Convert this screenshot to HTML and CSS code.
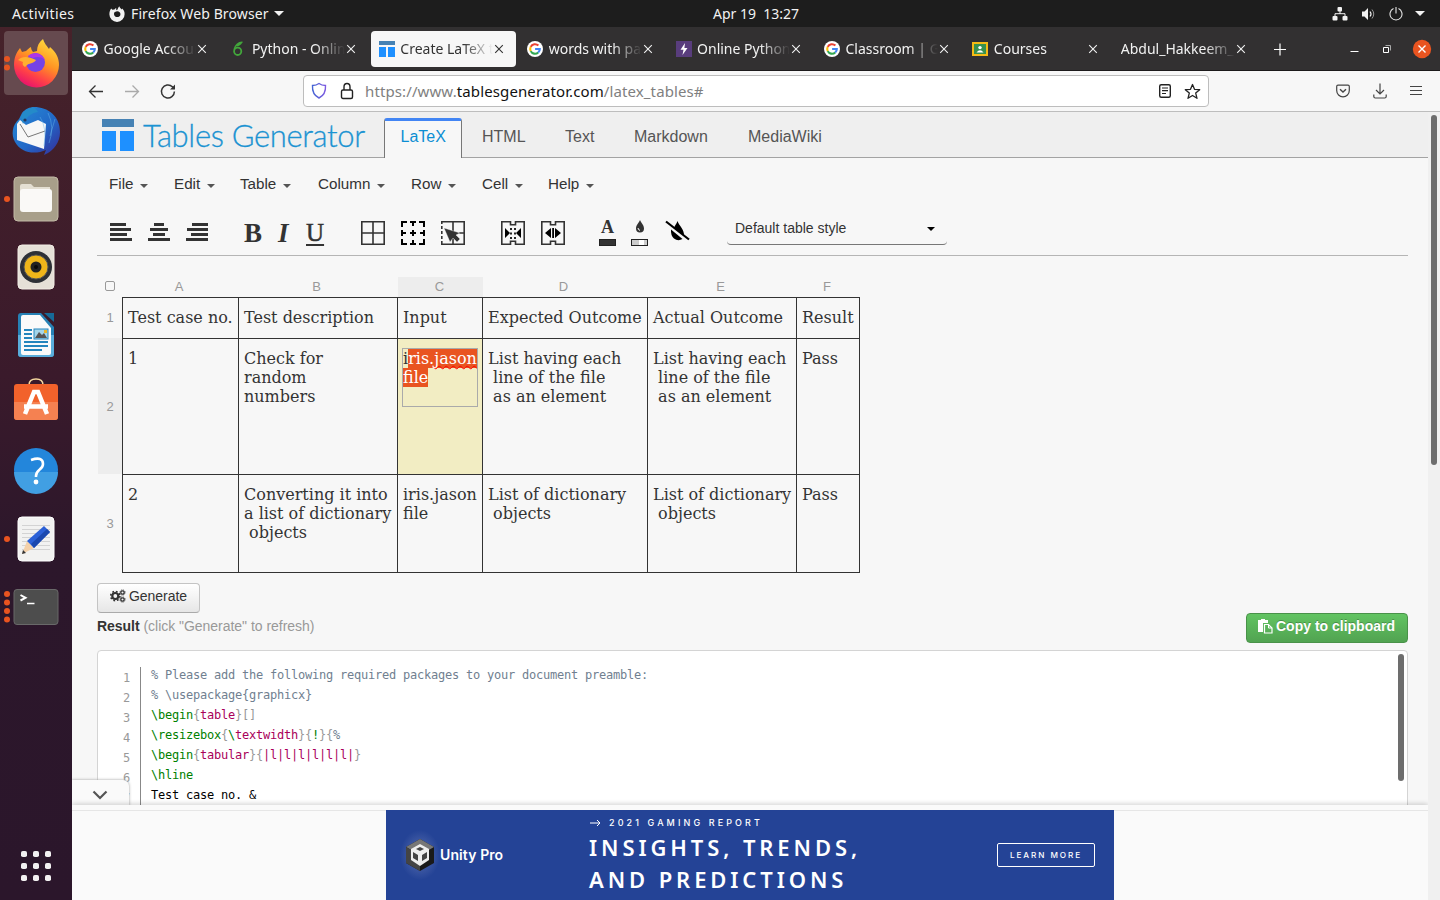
FILE: index.html
```html
<!DOCTYPE html>
<html lang="en">
<head>
<meta charset="utf-8">
<title>Create LaTeX tables online</title>
<link rel="stylesheet" href="styles.css">
</head>
<body>
<svg width="0" height="0" class="defs">
  <defs>
    <symbol id="google" viewBox="0 0 16 16"><circle cx="8" cy="8" r="8" fill="#fff"/><g fill="none" stroke-width="2.1"><path d="M11.4 4.6A4.8 4.8 0 0 0 3.7 5.9" stroke="#ea4335"/><path d="M3.7 5.9a4.8 4.8 0 0 0 0 4.2" stroke="#fbbc05"/><path d="M3.7 10.1a4.8 4.8 0 0 0 7.5 1.4" stroke="#34a853"/><path d="M11.2 11.5A4.6 4.6 0 0 0 12.8 8H8.1" stroke="#4285f4"/></g></symbol>
    <symbol id="x" viewBox="0 0 10 10"><path d="M1.2 1.2l7.6 7.6M8.8 1.2L1.2 8.8" stroke="currentColor" stroke-width="1.1" fill="none"/></symbol>
    <symbol id="tg" viewBox="0 0 32 32"><path fill="#4682b4" d="M0 0h32v8H0z"/><path fill="#1e90ff" d="M0 12h14v20H0zM18 12h14v20H18z"/></symbol>
    <symbol id="caret" viewBox="0 0 8 4"><path d="M0 0h8L4 4z" fill="currentColor"/></symbol>
  </defs>
</svg>
<header class="topbar">
  <span class="activities">Activities</span>
  <svg class="ffmono" width="16" height="16" viewBox="0 0 16 16"><path fill="#f2f2f2" fill-rule="evenodd" d="M2.2 2.4l1.2 1.4 2-.3C6 2.4 7 1.900 7.300 1.900c-.5 1 0 1.900.7 2.400C9 3 9 1.500 10.300.2c.3 1.600 1.500 2.200 2.500 3.200l.4-.9C14.800 4 15.700 6 15.600 8.200A7.600 7.600 0 0 1 .4 8.400C.3 6 1 4 2.200 2.400zM8 5.300c-1 .1-2 .5-2.800 1.400-.7 2.100.6 4.400 3 4.400 2.600 0 4.100-2.500 2.700-4.700C10 5.800 9 5.200 8 5.300z"/></svg>
  <span class="appname">Firefox Web Browser</span>
  <svg class="topcaret" width="10" height="5"><use href="#caret"/></svg>
  <span class="clock">Apr 19&nbsp; 13:27</span>
  <div class="tray">
    <svg width="16" height="14" viewBox="0 0 16 14"><g fill="#f2f2f2"><rect x="5.500" y="0" width="4.500" height="4.500" rx="1"/><rect x="0.500" y="9" width="5" height="4.500" rx="1"/><rect x="10.500" y="9" width="5" height="4.500" rx="1"/></g><path d="M8 4v3M3 9.500V6.700h10v2.800" stroke="#f2f2f2" fill="none"/></svg>
    <svg width="16" height="14" viewBox="0 0 16 14"><path d="M1 4.500h2.500L7 1v12L3.500 9.500H1z" fill="#f2f2f2"/><path d="M9 4.500q2 2.500 0 5" stroke="#f2f2f2" stroke-width="1.200" fill="none"/><path d="M11 2.500q3.500 4.500 0 9" stroke="#999" fill="none"/></svg>
    <svg width="14" height="14" viewBox="0 0 14 14"><path d="M4.500 1.600a6 6 0 1 0 5 0M7 0v6.500" stroke="#e6e6e6" stroke-width="1.100" fill="none"/></svg>
    <svg width="10" height="5"><use href="#caret"/></svg>
  </div>
</header>
<div class="desktop">
  <nav class="dock">
    <svg width="72" height="68" viewBox="0 0 72 68"><defs><linearGradient id="fx" x1=".8" y1="0" x2=".3" y2="1"><stop offset="0" stop-color="#ffe13f"/><stop offset=".45" stop-color="#ff9423"/><stop offset=".75" stop-color="#ff4048"/><stop offset="1" stop-color="#e5106f"/></linearGradient></defs><rect x="4" y="2" width="64" height="64" rx="4" fill="#664a4f"/><path fill="url(#fx)" d="M20 19l2 4 4-1c2-2 3-3 5-4 0 2 1 4 2 5l4-1c0-5 2-9 6-12 1 4 4 7 6 10l1-2c6 5 9 11 9 18A22.500 22.500 0 0 1 14 36c0-7 2-12 6-17z"/><circle cx="35.500" cy="33.500" r="9.500" fill="#7542e5"/><path d="M28 27c6-5 14-3 17 4-5-4-9-3-12-2z" fill="#b035e8"/><path fill="#ffb02e" d="M18 31c4-4 10-4 18 0-2 4-7 2-11 7-2-1-3-3-2-5z"/><g fill="#e95420"><circle cx="7" cy="30" r="3"/><circle cx="7" cy="38.500" r="3"/></g></svg>
    <svg width="72" height="68" viewBox="0 0 72 68"><defs><linearGradient id="tb" x1="0" y1="0" x2="1" y2="1"><stop offset="0" stop-color="#268cd5"/><stop offset=".55" stop-color="#2269c8"/><stop offset="1" stop-color="#352b98"/></linearGradient></defs><path fill="url(#tb)" d="M22 16c3-4 8-6 12-6 14 0 26 9 26 25 0 11-7 18-12 21l-4 2 2-5c-11 5-25 3-31-8-4-7-3-17 4-23z"/><path d="M17 27l3-4 6 5 12-5 8 4-2 25-27-9z" fill="#f7f7f7"/><path d="M20 27l8 13 17-6" stroke="#777" fill="none"/><path d="M21 20c3-8 10-10 14-9l3 4c-7 1-12 5-15 12z" fill="#248bc9"/><circle cx="25" cy="23" r="1.600" fill="#233860"/><path d="M40 20q7 10 4 29M48 16q7 14 1 30M55 22l-5 17" stroke="#65b8ea" opacity=".45" fill="none"/></svg>
    <svg width="72" height="68" viewBox="0 0 72 68"><rect x="14" y="12" width="44" height="44" rx="4" fill="#a89f8a" stroke="#c2b9a6"/><path d="M20 32V21q0-2 2-2h9l3 3h16v14z" fill="#e4dfd2"/><rect x="20" y="24" width="32" height="23" rx="3" fill="#faf9f7"/><circle cx="7" cy="34" r="3" fill="#e95420"/></svg>
    <svg width="72" height="68" viewBox="0 0 72 68"><rect x="18" y="12" width="36" height="44" rx="4" fill="#e5e0d7" stroke="#f2ede5"/><circle cx="36" cy="34" r="16" fill="#2d3036"/><circle cx="36" cy="34" r="12" fill="#efb51a" stroke="#555"/><circle cx="36" cy="34" r="5.500" fill="#222"/><circle cx="36" cy="34" r="2" fill="#090909"/></svg>
    <svg width="72" height="68" viewBox="0 0 72 68"><path d="M18 15q0-3 3-3h20l13 14v27q0 3-3 3H21q-3 0-3-3z" fill="#2681b5"/><path d="M18 34h36v19q0 3-3 3H21q-3 0-3-3z" fill="#59addb"/><path d="M21 16q0-2 2-2h17l11 13v25q0 2-2 2H23q-2 0-2-2z" fill="#fafafa"/><path d="M44 12h10v9z" fill="#176a98"/><g stroke="#2485bd" stroke-width="2"><path d="M24 29h8M24 33h8M24 37h8M24 41h24M24 45h24M24 49h18"/></g><rect x="34" y="28" width="14" height="10" fill="#a4d5e9" stroke="#2485bd"/><path d="M35 37l4-6 3 3 2-2 3 5z" fill="#555"/><rect x="44" y="29" width="3" height="3" fill="#e9b62b"/></svg>
    <svg width="72" height="68" viewBox="0 0 72 68"><path d="M29 18v-2q0-6 7-6t7 6v2" fill="none" stroke="#f6d9a0" stroke-width="1.500"/><rect x="14" y="15" width="44" height="36" rx="3" fill="#f2622b"/><path d="M14 33h44v15q0 3-3 3H17q-3 0-3-3z" fill="#f58151"/><path d="M25 45l9-22h4l9 22M24 37.500h24" stroke="#fff" stroke-width="4.500" fill="none"/></svg>
    <svg width="72" height="68" viewBox="0 0 72 68"><circle cx="36" cy="33" r="22" fill="#2386db"/><path d="M14 35a22 22 0 0 0 44 0z" fill="#419fe3"/><path d="M31 23q12-4 12 4c0 6-7 5-7 12v1" stroke="#fff" stroke-width="2.600" fill="none"/><circle cx="36" cy="45" r="2.400" fill="#fff"/></svg>
    <svg width="72" height="68" viewBox="0 0 72 68"><rect x="18" y="12" width="36" height="44" rx="4" fill="#f2f2f1" stroke="#fff"/><path d="M22 20.500h28M22 24.500h28M22 28.500h28M22 32.500h28M22 36.500h28M22 40.500h28M22 44.500h28" stroke="#d3d3d3"/><path d="M22 49l5-13 7 7z" fill="#f4d1aa"/><path d="M27 36l17-15 6 6-16 16z" fill="#2c61d7"/><path d="M31 39l16-15 3 3-16 16z" fill="#1b48ae"/><path d="M22 49l1-4 3 3z" fill="#333"/><circle cx="7" cy="34" r="3" fill="#e95420"/></svg>
    <svg width="72" height="68" viewBox="0 0 72 68"><rect x="14" y="16.500" width="44" height="35" rx="3" fill="#4d4d4d" stroke="#696969"/><path d="M20.500 22l5 2.800-5 2.700" stroke="#fff" stroke-width="2" fill="none"/><path d="M27 30.500h7.500" stroke="#fff" stroke-width="1.500"/><g fill="#e95420"><circle cx="7" cy="21" r="3"/><circle cx="7" cy="29.500" r="3"/><circle cx="7" cy="38" r="3"/><circle cx="7" cy="46.500" r="3"/></g></svg>
    <svg class="launcher" width="72" height="40" viewBox="0 0 72 40"><g fill="#f3f1f2"><rect x="21" y="5" width="6" height="6" rx="1.800"/><rect x="33" y="5" width="6" height="6" rx="1.800"/><rect x="45" y="5" width="6" height="6" rx="1.800"/><rect x="21" y="17" width="6" height="6" rx="1.800"/><rect x="33" y="17" width="6" height="6" rx="1.800"/><rect x="45" y="17" width="6" height="6" rx="1.800"/><rect x="21" y="29" width="6" height="6" rx="1.800"/><rect x="33" y="29" width="6" height="6" rx="1.800"/><rect x="45" y="29" width="6" height="6" rx="1.800"/></g></svg>
  </nav>
  <main class="window">
    <div class="tabs">
      <div class="tab"><svg class="fav"><use href="#google"/></svg><span class="title">Google Accounts</span><svg class="close"><use href="#x"/></svg></div>
      <div class="tab"><svg class="fav" viewBox="0 0 16 16"><path d="M12.500 1.300C8.500 1 5 4.500 4.200 8.500M5.500 4.500q3.500.5 6-3" stroke="#42a63b" stroke-width="1.500" fill="none"/><ellipse cx="7.700" cy="10.300" rx="3.600" ry="3.700" stroke="#42a63b" stroke-width="1.800" fill="none"/></svg><span class="title">Python - Online LaTeX</span><svg class="close"><use href="#x"/></svg></div>
      <div class="tab active"><svg class="fav"><use href="#tg"/></svg><span class="title">Create LaTeX tables</span><svg class="close"><use href="#x"/></svg></div>
      <div class="tab"><svg class="fav"><use href="#google"/></svg><span class="title">words with pa in them</span><svg class="close"><use href="#x"/></svg></div>
      <div class="tab"><svg class="fav" viewBox="0 0 16 16"><path d="M0 0h16v16H0z" fill="#593d7d"/><path d="M9 2L4.500 8.700h3L6.500 14 11.500 7H8.400z" fill="#fff"/></svg><span class="title">Online Python Compiler</span><svg class="close"><use href="#x"/></svg></div>
      <div class="tab"><svg class="fav"><use href="#google"/></svg><span class="title">Classroom | Google</span><svg class="close"><use href="#x"/></svg></div>
      <div class="tab"><svg class="fav" viewBox="0 0 16 16"><path d="M0 1h16v14H0z" fill="#f5ba15"/><path d="M2 3h12v10H2z" fill="#39904e"/><circle cx="8" cy="6.600" r="1.700" fill="#fff"/><path d="M4.500 11.500q3.500-4.500 7 0z" fill="#fff"/></svg><span class="title">Courses</span><svg class="close"><use href="#x"/></svg></div>
      <div class="tab"><span class="title">Abdul_Hakkeem_PA</span><svg class="close"><use href="#x"/></svg></div>
      <svg class="winctl" width="176" height="44" viewBox="0 0 176 44"><g stroke="#fff" fill="none"><path d="M18 22.500h12M24 16.500v12" stroke-width="1.200"/><path d="M94.500 24.500h8"/><path d="M127.500 20.500h5v5h-5z"/><path d="M129.500 18.500h5v5" stroke="#aaa"/></g><circle cx="166" cy="22" r="9.200" fill="#e95420"/><path d="M162.500 18.500l7 7M169.500 18.500l-7 7" stroke="#fff" stroke-width="1.400"/></svg>
    </div>
    <div class="navbar">
      <svg class="navicons" width="120" height="40" viewBox="0 0 120 40"><g fill="none" stroke-width="1.300"><path d="M31 20.500H17.500M23.500 14.500l-6 6 6 6" stroke="#333"/><path d="M53 20.500h13.500M60.500 14.500l6 6-6 6" stroke="#aaa"/><path d="M102.400 20.500a6.500 6.500 0 1 1-2-4.700l2 2" stroke="#333" stroke-width="1.500"/></g><path d="M103 13.500v5h-5z" fill="#333"/></svg>
      <div class="urlbar">
        <svg width="16" height="18" viewBox="0 0 16 18"><defs><linearGradient id="sh"><stop offset="0" stop-color="#4464d3"/><stop offset="1" stop-color="#7d5ae0"/></linearGradient></defs><path d="M8 1.500c2 1.500 4 2 6.500 2 .4 6-1.500 10-6.500 12.500C3 13.500 1.100 9.500 1.500 3.500 4 3.500 6 3 8 1.500z" fill="none" stroke="url(#sh)" stroke-width="1.400"/></svg>
        <svg class="lock" width="14" height="18" viewBox="0 0 14 18"><rect x="1.500" y="8" width="11" height="8.500" rx="1.500" fill="none" stroke="#222" stroke-width="1.400"/><path d="M4 8V5q0-3.500 3-3.500T10 5v3" fill="none" stroke="#222" stroke-width="1.400"/></svg>
        <span class="url">https://www.<b>tablesgenerator.com</b>/latex_tables#</span>
        <svg class="reader" width="14" height="16" viewBox="0 0 14 16"><rect x="1.700" y="1.700" width="10.600" height="12.600" rx="1.500" fill="none" stroke="#222" stroke-width="1.400"/><path d="M4 5h6M4 7.700h6M4 10.500h4" stroke="#222" stroke-width="1.200"/></svg>
        <svg width="17" height="17" viewBox="0 0 17 17"><path d="M8.500 1.500l2 4.800 5.200.4-4 3.400 1.300 5.200-4.500-2.800L4 15.300l1.300-5.200-4-3.400 5.200-.4z" fill="none" stroke="#222" stroke-width="1.300" stroke-linejoin="round"/></svg>
      </div>
      <div class="naveend">
        <svg width="14" height="14" viewBox="0 0 14 14"><path d="M2 1.200h10q1.300 0 1.300 1.300v4a6.300 6.300 0 0 1-12.600 0v-4q0-1.300 1.300-1.300z" fill="none" stroke="#444" stroke-width="1.200"/><path d="M4 5.200L7 8l3-2.800" fill="none" stroke="#444" stroke-width="1.400"/></svg>
        <svg width="14" height="16" viewBox="0 0 14 16"><path d="M7 .5v10M3 7l4 4 4-4M.8 11.500v2q0 1.500 1.500 1.500h9.400q1.500 0 1.500-1.500v-2" fill="none" stroke="#444" stroke-width="1.200"/></svg>
        <svg width="12" height="12" viewBox="0 0 12 12"><path d="M0 1.500h12M0 5.500h12M0 9.500h12" stroke="#444" stroke-width="1.200"/></svg>
      </div>
    </div>
    <div class="viewport">
      <div class="page">
        <div class="sitehead">
          <svg width="32" height="32"><use href="#tg"/></svg>
          <span class="brand">Tables Generator</span>
          <div class="sitenav"><span class="on">LaTeX</span><span class="n2">HTML</span><span class="n3">Text</span><span class="n4">Markdown</span><span class="n5">MediaWiki</span></div>
        </div>
        <div class="menu">
          <span class="m1">File<svg><use href="#caret"/></svg></span><span class="m2">Edit<svg><use href="#caret"/></svg></span><span class="m3">Table<svg><use href="#caret"/></svg></span><span class="m4">Column<svg><use href="#caret"/></svg></span><span class="m5">Row<svg><use href="#caret"/></svg></span><span class="m6">Cell<svg><use href="#caret"/></svg></span><span class="m7">Help<svg><use href="#caret"/></svg></span>
        </div>
        <div class="tools">
          <svg width="98" height="20" viewBox="0 0 98 20"><g stroke="#333" stroke-width="3"><path d="M0 2.500h16M0 7.500h21M0 12.500h17M0 17.500h22M44 2.500h10M40 7.500h18M43 12.500h12M38 17.500h22M82 2.500h16M77 7.500h21M81 12.500h17M76 17.500h22"/></g></svg>
          <span class="tb">B</span><span class="ti">I</span><span class="tu">U</span>
          <svg class="grid1" width="104" height="24" viewBox="0 0 104 24"><g fill="none" stroke="#333" stroke-width="1.600"><path d="M.8.8h22.400v22.400H.8zM12 0v24M0 12h24"/><path d="M80 .8h23.200v22.400H80M92 0v24M98 12h6"/><path d="M80.800 0v24" stroke-dasharray="3 2"/></g><g fill="none" stroke="#000" stroke-width="2"><path d="M41 6V1h5M58 1h5v5M63 18v5h-5M46 23h-5v-5M49 1h6M49 23h6M41 9v6M63 9v6M52 1v4M52 9v6M52 19v4M41 12h4M49 12h6M59 12h4"/></g><path d="M83 7l16 5-4 2 4 4-3 3-4-4-3 4z" fill="#333" stroke="#f7f7f7" stroke-width=".4"/></svg>
          <svg class="grid2" width="64" height="24" viewBox="0 0 64 24"><path d="M9.500.8H.8v22.400h8.700v-3h5v3h8.700V.8h-8.700v3h-5zM49.500.8h-8.700v22.400h8.700v-3h5v3h8.700V.8h-8.700v3h-5z" fill="none" stroke="#333" stroke-width="1.600"/><path d="M4 7l5 5-5 5zM20 7l-5 5 5 5zM50 7l-6 5 6 5zM54 7l6 5-6 5zM51.200 7h1.800v10h-1.800z"/><path d="M10 7v11M14 7v11" stroke="#000" stroke-width="1.700" stroke-dasharray="2 2.500"/></svg>
          <span class="fg"><b>A</b><i></i></span>
          <span class="bgc"><svg width="10" height="13" viewBox="0 0 10 13"><path d="M5 0C6 3 9 5 9 8.500a4 4 0 0 1-8 0C1 5 4 3 5 0z" fill="#333"/><path d="M3 8q.2 2 2 2.400" stroke="#fff" fill="none"/></svg><i></i></span>
          <svg class="nodrop" width="25" height="22" viewBox="0 0 25 22"><path d="M12.500 1c1.500 5 7 8 6.500 15L9 8c1-3 2.500-4 3.500-7z"/><path d="M6 9.500L17.500 19Q13 21.500 9 18.500 5.500 15.500 6 9.500z"/><path d="M1 1.500l23 18" stroke="#000" stroke-width="2.200"/></svg>
          <span class="select">Default table style<svg><use href="#caret"/></svg></span>
        </div>
        <div class="sheet">
          <span class="corner"><i></i></span><span class="h">A</span><span class="h">B</span><span class="h sel">C</span><span class="h">D</span><span class="h">E</span><span class="h">F</span>
          <span class="r">1</span><div class="c">Test case no.</div><div class="c">Test description</div><div class="c">Input</div><div class="c">Expected Outcome</div><div class="c">Actual Outcome</div><div class="c last">Result</div>
          <span class="r sel">2</span><div class="c">1</div><div class="c">Check for
random
numbers</div><div class="c cur"><div class="edit">i<mark>ris.<u>jason</u></mark>
<mark>file</mark></div></div><div class="c">List having each
 line of the file
 as an element</div><div class="c">List having each
 line of the file
 as an element</div><div class="c last">Pass</div>
          <span class="r">3</span><div class="c bot">2</div><div class="c bot">Converting it into
a list of dictionary
 objects</div><div class="c bot">iris.jason
file</div><div class="c bot">List of dictionary
 objects</div><div class="c bot">List of dictionary
 objects</div><div class="c bot last">Pass</div>
        </div>
        <span class="btn"><svg width="16" height="14" viewBox="0 0 16 14"><g fill="none" stroke="#333"><circle cx="5.300" cy="7" r="3" stroke-width="2.200"/><circle cx="5.300" cy="7" r="4.600" stroke-width="1.600" stroke-dasharray="1.800 1.810"/><circle cx="12.500" cy="3.500" r="1.700" stroke-width="1.300"/><circle cx="12.500" cy="3.500" r="2.600" stroke-dasharray="1 1.040"/><circle cx="12.500" cy="10.500" r="1.700" stroke-width="1.300"/><circle cx="12.500" cy="10.500" r="2.600" stroke-dasharray="1 1.040"/></g></svg>Generate</span>
        <div class="resultrow"><span class="reslabel"><b>Result</b> (click "Generate" to refresh)</span><span class="copy"><svg width="15" height="15" viewBox="0 0 15 15"><path d="M0 1h3V0h4v1h3v3H5v9H0z" fill="#fff"/><path d="M6.500 5.500h4l3.500 3.500v5H6.500z" fill="none" stroke="#fff" stroke-width="1.200"/><path d="M10.500 5.500V9H14" stroke="#fff" fill="none"/></svg>Copy to clipboard</span></div>
        <div class="codebox">
          <div class="nums">1
2
3
4
5
6
7</div>
          <pre class="code"><s>% Please add the following required packages to your document preamble:</s>
<s>% \usepackage{graphicx}</s>
<em>\begin</em><q>{</q><b>table</b><q>}[]</q>
<em>\resizebox</em><q>{</q><em>\</em><b>textwidth</b><q>}{</q><em>!</em><q>}{</q><s>%</s>
<em>\begin</em><q>{</q><b>tabular</b><q>}{</q><b>|l|l|l|l|l|l|</b><q>}</q>
<em>\hline</em>
Test case no. &amp;</pre>
          <i class="codethumb"></i>
        </div>
        <div class="adwrap">
          <div class="adtab"><svg width="16" height="10" viewBox="0 0 16 10"><path d="M1.500 1.500L8 8l6.500-6.500" stroke="#555" stroke-width="2.200" fill="none"/></svg></div>
          <div class="adstrip"></div>
          <div class="adarea">
            <div class="ad">
              <svg class="unity" width="40" height="50" viewBox="0 0 40 50"><defs><radialGradient id="glow"><stop offset=".4" stop-color="#6d80ba" stop-opacity=".45"/><stop offset="1" stop-color="#6d80ba" stop-opacity="0"/></radialGradient></defs><ellipse cx="20" cy="25" rx="20" ry="25" fill="url(#glow)"/><path d="M20 9l14 8v16l-14 8-14-8V17z" fill="#1a1a1a"/><path d="M20 9l14 8-14 8-14-8z" fill="#777"/><path d="M6 17l14 8v16L6 33z" fill="#444"/><path d="M20 14l9 5v11l-9 6-9-6V19z" fill="#eee"/><path d="M20 17l4 2-4 2-4-2zM13 22l5 3v6l-5-3zM27 22l-5 3v6l5-3z" fill="#444"/></svg>
              <span class="uname">Unity Pro</span>
              <div class="adtext"><div class="rep"><svg width="13" height="8" viewBox="0 0 13 8"><path d="M1 4h10M8 1l3 3-3 3" stroke="#fff" fill="none"/></svg>2021 GAMING REPORT</div><div class="big">INSIGHTS, TRENDS,</div><div class="big big2">AND PREDICTIONS</div></div>
              <span class="learn">LEARN MORE</span>
            </div>
          </div>
        </div>
      </div>
      <div class="scroll"><i></i></div>
    </div>
  </main>
</div>
</body>
</html>
```
FILE: styles.css
```css
* { box-sizing: border-box; }
body { margin: 0; width: 1440px; height: 900px; overflow: hidden; font-family: "Liberation Sans", sans-serif; color: #333; }
svg { display: block; flex: none; }
.defs { position: absolute; }
.topbar { height: 27px; background: #1d1d1d; color: #f2f2f2; display: flex; align-items: center; font: 14px "Noto Sans", sans-serif; white-space: nowrap; }
.activities { width: 97px; padding-left: 12px; letter-spacing: .4px; }
.ffmono { margin-left: 12px; }
.appname { width: 143px; margin-left: 6px; letter-spacing: .12px; }
.clock { width: 90px; margin-left: 429px; letter-spacing: 0; }
.tray { margin-left: auto; padding-right: 15px; display: flex; align-items: center; gap: 12px; }
.tray svg:nth-child(2) { margin-left: 1px; }
.tray svg:first-child { margin-left: 0; }
.desktop { display: flex; height: 873px; }
.dock { width: 72px; background: linear-gradient(#46222a, #3a1a2b 40%, #2c172b 60%, #2b162b); padding-top: 2px; display: flex; flex-direction: column; }
.launcher { margin-top: auto; margin-bottom: 14px; }
.window { width: 1368px; display: flex; flex-direction: column; background: #f7f7f7; }
.tabs { height: 44px; background: #323031; border-bottom: 1px solid #1c1a1b; display: flex; padding-left: 2px; align-items: center; font: 14px "Noto Sans", sans-serif; color: #f2f2f2; }
.tab { width: 145.400px; margin-right: 3px; height: 36px; display: flex; align-items: center; padding-left: 8px; border-radius: 4px; flex: none; }
.tab.active { background: #f7f7f7; color: #333; }
.fav { width: 16px; height: 16px; margin-right: 5.500px; }
.title { flex: 1; min-width: 0; white-space: nowrap; overflow: hidden; line-height: 20px; padding-top: 1px; mask-image: linear-gradient(90deg, #000 calc(100% - 30px), transparent); }
.close { width: 10px; height: 10px; margin-right: 12px; margin-left: 1px; }
.winctl { margin-left: -5px; }
.navbar { height: 41px; border-bottom: 1px solid #bdbdbd; display: flex; align-items: center; }
.navicons { margin-right: 111px; }
.urlbar { width: 906px; height: 32px; border: 1px solid #bdbdbd; border-radius: 4px; background: #fff; display: flex; align-items: center; padding: 0 7px; }
.lock { margin-left: 13px; }
.url { margin-left: 11px; font: 15px "Noto Sans", sans-serif; letter-spacing: .11px; color: #808080; white-space: nowrap; }
.url b { font-weight: 400; color: #111; }
.reader { margin-left: auto; margin-right: 12px; }
.naveend { display: flex; align-items: center; margin-left: auto; gap: 23px; padding-right: 18px; }
.viewport { display: flex; flex: 1; min-height: 0; }
.scroll { width: 12px; background: #f0f0f0; padding: 3px; }
.scroll i { display: block; width: 6px; height: 350px; border-radius: 3px; background: #6d6d6d; }
.page { width: 1356px; height: 788px; position: relative; overflow: hidden; }
.sitehead { height: 46px; background: #efefef; border-bottom: 1px solid #a3a3a3; display: flex; align-items: center; padding-left: 30px; }
.brand { width: 241px; margin-left: 9px; font: 300 31px/40px Lato, sans-serif; letter-spacing: -.33px; -webkit-text-stroke: .3px #1b93d2; color: #1b93d2; white-space: nowrap; }
.sitenav { display: flex; align-self: flex-end; font-size: 16px; line-height: 18px; color: #555; margin-bottom: -1px; }
.sitenav span { padding-top: 10px; white-space: nowrap; }
.sitenav .on { width: 78px; height: 40px; border: 1px solid #777; border-top: 3px solid #4285f4; border-bottom: 0; border-radius: 3px 3px 0 0; background: #f7f7f7; color: #0b8ed3; padding: 7px 0 0 15.500px; }
.n2 { margin-left: 20px; width: 83px; } .n3 { width: 69px; } .n4 { width: 114px; }
.menu { display: flex; height: 52px; padding: 0 0 2px 37px; align-items: center; font-size: 15.200px; }
.menu span { display: flex; align-items: center; gap: 7px; white-space: nowrap; }
.menu svg { width: 8px; height: 4px; margin-top: 5px; color: #555; }
.m1 { width: 65px; } .m2 { width: 66px; } .m3 { width: 78px; } .m4 { width: 93px; } .m5 { width: 71px; } .m6 { width: 66px; }
.tools { margin: 0 20px 0 25px; height: 46px; border-bottom: 1px solid #b5b5b5; display: flex; align-items: center; padding-left: 13px; }
.tools > svg:first-child { margin-bottom: 1px; }
.tb, .ti, .tu { font: bold 27px/30px "Liberation Serif", serif; width: 34px; }
.tb { margin-left: 36px; } .ti { width: 28px; font-style: italic; }
.tu { width: 20px; font-weight: 400; font-size: 25px; line-height: 22px; -webkit-text-stroke: .5px #333; text-decoration: underline; text-decoration-thickness: 1.500px; text-underline-offset: 3px; }
.grid1 { margin-left: 35px; } .grid2 { margin-left: 36px; }
.fg { margin-left: 34px; } .bgc { margin-left: 15px; }
.fg, .bgc { display: flex; flex-direction: column; align-items: center; justify-content: space-between; height: 26px; width: 17px; }
.fg b { font: bold 18px/15px "Liberation Serif", serif; }
.fg i, .bgc i { width: 17px; height: 7px; background: #333; border: 1px solid #222; }
.bgc i { background: linear-gradient(90deg, #ccc 45%, #fff 45% 80%, #ccc 80%); }
.nodrop { margin-left: 17px; margin-bottom: 4px; }
.select { margin-left: 37px; width: 220px; height: 31px; margin-bottom: 6px; border-bottom: 1px solid #777; border-radius: 4px; padding: 0 12px 2px 8px; display: flex; align-items: center; justify-content: space-between; font-size: 14px; }
.select svg { width: 8px; height: 4px; color: #000; margin-top: 2px; }
.sheet { margin: 21px 0 0 26px; display: grid; grid-template-columns: 24px 116px 159px 85px 165px 149px 64px; grid-template-rows: 20px 41px 136px 99px; width: 762px; }
.h, .r, .corner { display: flex; align-items: center; justify-content: center; font-size: 13px; color: #999; }
.h { padding: 0 2px 2px 0; } .sel { background: #ededed; }
.h.sel { margin-left: 1px; margin-right: -1px; }
.corner i { width: 10px; height: 10px; border: 1px solid #999; border-radius: 2px; margin-bottom: 2px; }
.c { border: 1px solid #333; border-width: 1px 0 0 1px; padding: 10px 0 0 5px; font: 16px/19px "DejaVu Serif", serif; white-space: pre; }
.c.last { border-right-width: 1px; } .c.bot { border-bottom-width: 1px; }
.c.cur { background: #f2edc3; padding: 9px 0 0 4px; }
.edit { width: 76px; height: 59px; border: 1px solid #aaa; }
.edit mark { background: #e95420; color: #fff; }
.edit u { text-decoration: underline wavy #f00 1px; text-decoration-skip-ink: none; text-underline-offset: 1px; }
.btn { margin: 10px 0 0 25px; width: 103px; height: 30px; border: 1px solid #c4c4c4; border-bottom-color: #aaa; border-radius: 4px; background: linear-gradient(#fff, #e6e6e6); display: flex; align-items: center; padding: 0 0 4px 12px; gap: 3px; font-size: 14px; letter-spacing: -.05px; }
.resultrow { display: flex; justify-content: space-between; margin: 0 20px 0 25px; height: 37px; }
.reslabel { font-size: 14px; line-height: 26px; color: #999; letter-spacing: -.03px; } .reslabel b { color: #333; }
.copy { width: 162px; height: 30px; border: 1px solid #499249; border-radius: 4px; background: linear-gradient(#62c462, #51a351); display: flex; align-items: center; gap: 3px; padding: 0 0 4px 11px; color: #fff; font-weight: bold; font-size: 14px; text-shadow: 0 -1px 0 rgba(0,0,0,.25); white-space: nowrap; }
.codebox { margin: 0 20px 0 25px; height: 200px; background: #fff; border: 1px solid #d4d4d4; border-radius: 4px; display: flex; padding: 16px 3px 0 0; font: 12px/20px "DejaVu Sans Mono", monospace; letter-spacing: -.225px; }
.nums { width: 32px; text-align: right; white-space: pre; color: #999; padding-top: 1px; }
.code { margin: 0 0 0 10px; border-left: 1px solid #888; padding-left: 10px; font: inherit; line-height: 20px; color: #000; }
.code::before { content: ""; display: block; margin-top: -2px; }
.code s { text-decoration: none; color: #708090; } .code em { font-style: normal; color: #008000; } .code b { font-weight: 400; color: #a9005a; } .code q { color: #999; quotes: none; }
.code q::before, .code q::after { content: none; }
.codethumb { width: 6px; height: 127px; border-radius: 3px; background: #6d6d6d; margin: -13px 0 0 auto; }
.adwrap { position: absolute; left: 0; bottom: 0; width: 1356px; height: 120px; }
.adtab { width: 57px; height: 26px; background: #fafafa; border-radius: 0 6px 0 0; box-shadow: 0 0 3px #999; display: flex; align-items: center; justify-content: center; padding: 3px 1px 0 0; }
.adstrip { height: 5px; margin-top: -1px; background: #fafafa; box-shadow: 0 -1px 5px rgba(0,0,0,.2); position: relative; }
.adarea { height: 90px; background: #fafafa; border-top: 1px solid #e6e6e6; display: flex; position: relative; }
.ad { width: 728px; height: 90px; margin: -1px 0 0 314px; background: #244396; color: #fff; display: flex; align-items: center; }
.unity { margin-left: 14px; }
.uname { font: 600 14px Inter, sans-serif; width: 149px; letter-spacing: .1px; margin-top: -2px; }
.adtext { width: 408px; align-self: flex-start; }
.rep { display: flex; align-items: center; gap: 7px; font: 500 9px/10px Inter, sans-serif; letter-spacing: 3.100px; margin-top: 8px; white-space: nowrap; }
.big { font: 600 22px/32px "Noto Sans", sans-serif; letter-spacing: 3.900px; margin-top: 3px; white-space: nowrap; }
.big2 { margin-top: 0; }
.learn { width: 98px; height: 24px; border: 1px solid #fff; border-radius: 2px; display: flex; align-items: center; justify-content: center; font: 500 8.200px Inter, sans-serif; letter-spacing: 1.900px; white-space: nowrap; }
```
